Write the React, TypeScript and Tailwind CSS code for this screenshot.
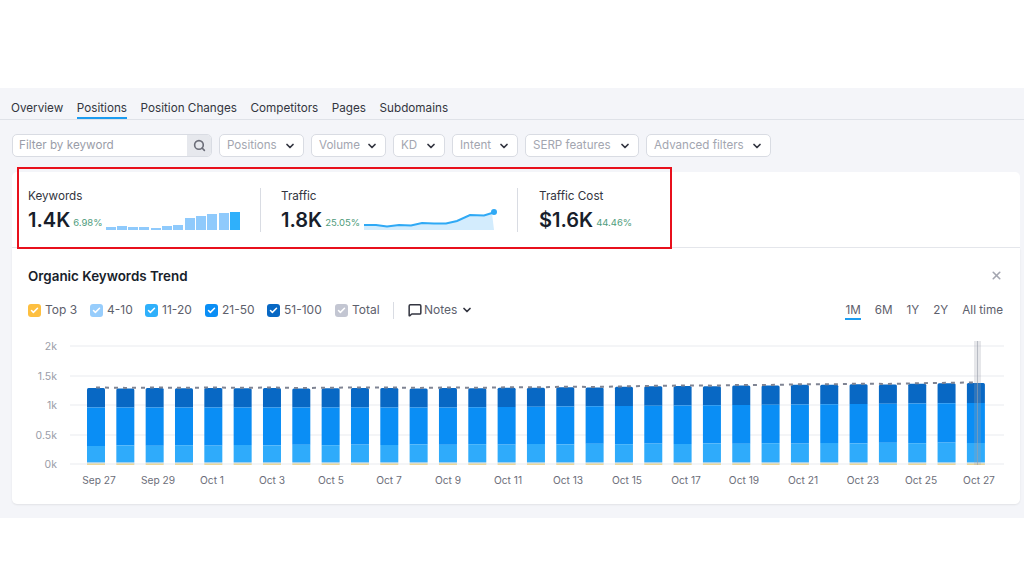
import { ChevronDown, MessageSquare, Search, X, Check } from "lucide-react";

const tabs = ["Overview", "Positions", "Position Changes", "Competitors", "Pages", "Subdomains"];

const filters = [
  { label: "Positions", width: "w-[85px]" },
  { label: "Volume", width: "w-[75px]" },
  { label: "KD", width: "w-[52px]" },
  { label: "Intent", width: "w-[66px]" },
  { label: "SERP features", width: "w-[114px]" },
  { label: "Advanced filters", width: "w-[125px]" },
];

const legend = [
  { label: "Top 3", color: "bg-[#fdbf40]", width: "w-[62px]" },
  { label: "4-10", color: "bg-[#97cdfc]", width: "w-[55px]" },
  { label: "11-20", color: "bg-[#2fb0fb]", width: "w-[60px]" },
  { label: "21-50", color: "bg-[#0a8ef5]", width: "w-[62px]" },
  { label: "51-100", color: "bg-[#0868c4]", width: "w-[68px]" },
  { label: "Total", color: "bg-[#c3c6d2]", width: "w-[58px]" },
];

const ranges = ["1M", "6M", "1Y", "2Y", "All time"];

const sparkBars = [3.5, 4, 3.5, 3.5, 2.5, 4, 5, 12, 14, 16, 17, 18];

const trafficLine =
  "M0 24 L12 24 L23 25.5 L35 24 L47 24.5 L58 22 L70 22.5 L82 22.5 L93 20 L106 14 L120 14.5 L128 12";

const dates = [
  { label: "Sep 27", x: 99 },
  { label: "Sep 29", x: 158 },
  { label: "Oct 1", x: 212 },
  { label: "Oct 3", x: 272 },
  { label: "Oct 5", x: 331 },
  { label: "Oct 7", x: 389 },
  { label: "Oct 9", x: 448 },
  { label: "Oct 11", x: 508 },
  { label: "Oct 13", x: 568 },
  { label: "Oct 15", x: 627 },
  { label: "Oct 17", x: 686 },
  { label: "Oct 19", x: 744 },
  { label: "Oct 21", x: 803 },
  { label: "Oct 23", x: 863 },
  { label: "Oct 25", x: 921 },
  { label: "Oct 27", x: 979 },
];

const yTicks = [
  { label: "2k", y: 345 },
  { label: "1.5k", y: 375 },
  { label: "1k", y: 404 },
  { label: "0.5k", y: 434 },
  { label: "0k", y: 463 },
];

const barCount = 31;

const Chart = () => {
  // coordinates are page pixels, the viewBox starts at the card's chart area
  const bars = Array.from({ length: barCount }, (_, i) => {
    const t = i / (barCount - 1);
    const wobble = [0, 0.4, 0, 0.3, 0, 0.3, 0, 0.5, 0.2, 0][i % 10];
    const top = 387 - 5 * Math.max(0, t - 0.45) / 0.55 + wobble;
    const darkEnd = 406.5 - 4.5 * Math.max(0, t - 0.4) / 0.6;
    const blueEnd = 445 - 3 * t - (i % 2 === 0 ? 0 : 0.5);
    return { x: 87 + i * 29.33, top, darkEnd, blueEnd };
  });

  return (
    <svg viewBox="12 335 1008 150" className="block w-[1008px] h-[150px]" style={{ fontFamily: "Inter, sans-serif" }}>
      {yTicks.map(t => (
        <g key={t.label}>
          <line x1="70" x2="1004" y1={t.y} y2={t.y} stroke="#e9ebef" strokeWidth="1" />
          <text x="57" y={t.y + 3.5} textAnchor="end" fontSize="10.5" fill="#9a9da8">
            {t.label}
          </text>
        </g>
      ))}
      {bars.map(b => (
        <g key={b.x}>
          <path
            d={`M${b.x} ${b.top + 1.5} Q${b.x} ${b.top} ${b.x + 1.5} ${b.top} H${b.x + 16.5} Q${b.x + 18} ${b.top} ${b.x + 18} ${b.top + 1.5} V${b.darkEnd} H${b.x} Z`}
            fill="#0868c4"
          />
          <rect x={b.x} y={b.darkEnd} width="18" height={b.blueEnd - b.darkEnd} fill="#0a8ef5" />
          <rect x={b.x} y={b.blueEnd} width="18" height={461 - b.blueEnd} fill="#2fabfb" />
          <rect x={b.x} y="461" width="18" height="1.5" fill="#9fd0f0" />
          <rect x={b.x} y="462.5" width="18" height="1.5" fill="#ecd79a" />
        </g>
      ))}
      <path
        d={`M96 386.5 ${bars.map(b => `L${b.x + 9} ${b.top - 0.5}`).join(" ")}`}
        fill="none"
        stroke="#7f8493"
        strokeWidth="2"
        strokeDasharray="4 5"
      />
      <rect x="974" y="340" width="7" height="124" fill="#9aa0ab" opacity="0.25" />
      <line x1="977.5" x2="977.5" y1="340" y2="464" stroke="#9aa0ab" strokeWidth="1" opacity="0.6" />
      {dates.map(d => (
        <text key={d.label} x={d.x} y="482.5" textAnchor="middle" fontSize="10.2" fill="#6c6e79">
          {d.label}
        </text>
      ))}
    </svg>
  );
};

const Stat = ({ title, value, delta, width, children }: { title: string; value: string; delta: string; width: string; children?: React.ReactNode }) => (
  <div className={`${width} shrink-0`}>
    <div className="text-[11.7px] leading-[16px] text-[#333540]">{title}</div>
    <div className="flex items-end mt-[4px] h-[24px]">
      <span className="text-[20px] leading-[24px] font-semibold text-[#181e2b]">{value}</span>
      <span className="text-[9.5px] leading-[14px] ml-[3px] mb-[2px] text-[#4f9c7c]">{delta}</span>
      {children}
    </div>
  </div>
);

export default function App() {
  return (
    <div className="w-[1024px] h-[577px] bg-white pt-[88px] overflow-hidden" style={{ fontFamily: "Inter, sans-serif" }}>
      <div className="h-[430px] bg-[#f4f5f9]">
        <div className="h-[32px] border-b border-[#dfe2e8] flex items-end gap-[13.6px] px-[11px]">
          {tabs.map(tab => (
            <div
              key={tab}
              className={`h-[22px] text-[11.7px] leading-[22px] text-[#333540] ${tab === "Positions" ? "border-b-2 border-[#1c9cf0]" : ""}`}
            >
              {tab}
            </div>
          ))}
        </div>

        <div className="flex gap-[7px] px-[12px] mt-[14px] h-[23px]">
          <div className="w-[200px] flex bg-white border border-[#d9dce3] rounded-[5px] overflow-hidden">
            <div className="flex-1 pl-[6px] text-[11.7px] leading-[21px] text-[#9a9da8]">Filter by keyword</div>
            <div className="w-[24px] bg-[#e6e8ed] flex items-center justify-center">
              <Search size={13} strokeWidth={3} className="text-[#6c6e79]" />
            </div>
          </div>
          {filters.map(f => (
            <div
              key={f.label}
              className={`${f.width} flex items-center justify-between pl-[7px] pr-[7px] bg-white border border-[#d9dce3] rounded-[5px] text-[11.6px] text-[#a3a6b0]`}
            >
              {f.label}
              <ChevronDown size={12} strokeWidth={3.5} className="text-[#333540]" />
            </div>
          ))}
        </div>

        <div className="relative ml-[12px] mr-[4px] mt-[15px] h-[76px] bg-white rounded-t-[5px] border-b border-[#e4e6eb] flex items-start pt-[16px] pl-[16px]">
          <Stat title="Keywords" value="1.4K" delta="6.98%" width="w-[232px]">
            <div className="flex items-end gap-[1.3px] ml-[3px] mb-[2px]">
              {sparkBars.map((h, i) => (
                <div
                  key={i}
                  className={`w-[10px] ${i === sparkBars.length - 1 ? "bg-[#2fb0fb]" : "bg-[#8fcafc]"}`}
                  style={{ height: h }}
                />
              ))}
            </div>
          </Stat>
          <div className="w-px h-[44px] bg-[#d9dce3] mr-[20px]" />
          <Stat title="Traffic" value="1.8K" delta="25.05%" width="w-[236px]">
            <svg viewBox="0 0 134 30" className="w-[134px] h-[30px] ml-[4px] mb-[1.5px] shrink-0">
              <path d={`${trafficLine} L130 29 L0 29 Z`} fill="#d3ecfd" />
              <path d={trafficLine} fill="none" stroke="#2fa9f5" strokeWidth="2" />
              <circle cx="130" cy="11" r="3" fill="#2fa9f5" />
            </svg>
          </Stat>
          <div className="w-px h-[44px] bg-[#d9dce3] mr-[21px]" />
          <Stat title="Traffic Cost" value="$1.6K" delta="44.46%" width="w-[130px]" />
          <div className="absolute left-[5px] top-[-5px] w-[655px] h-[82px] border-[2.5px] border-[#e8101c]" />
        </div>

        <div className="ml-[12px] mr-[4px] h-[256px] bg-white rounded-b-[5px] shadow-[0_1px_2px_rgba(0,0,0,0.08)]">
          <div className="flex items-center justify-between pl-[16px] pr-[17px] pt-[18px] h-[37px]">
            <div className="text-[13.4px] leading-[18px] font-semibold text-[#181e2b]">Organic Keywords Trend</div>
            <X size={13} strokeWidth={3} className="text-[#a3a6b0]" />
          </div>

          <div className="flex items-center h-[20px] mt-[15px] pl-[16px] pr-[17px] text-[12px] text-[#5d606c]">
            {legend.map(l => (
              <div key={l.label} className={`${l.width} flex items-center gap-[4px]`}>
                <div className={`w-[13px] h-[13px] rounded-[3px] flex items-center justify-center ${l.color}`}>
                  <Check size={9} strokeWidth={4} className="text-white" />
                </div>
                {l.label}
              </div>
            ))}
            <div className="w-px h-[17px] bg-[#d9dce3] mr-[14px]" />
            <MessageSquare size={14} strokeWidth={2.6} className="text-[#333540]" />
            <span className="ml-[2px]">Notes</span>
            <ChevronDown size={12} strokeWidth={3.5} className="text-[#333540] ml-[4px]" />
            <div className="ml-auto flex gap-[14px] text-[11.7px]">
              {ranges.map(r => (
                <div key={r} className={`h-[20px] leading-[20px] ${r === "1M" ? "border-b-2 border-[#1c9cf0]" : ""}`}>
                  {r}
                </div>
              ))}
            </div>
          </div>

          <div className="mt-[16px]">
            <Chart />
          </div>
        </div>
      </div>
    </div>
  );
}
